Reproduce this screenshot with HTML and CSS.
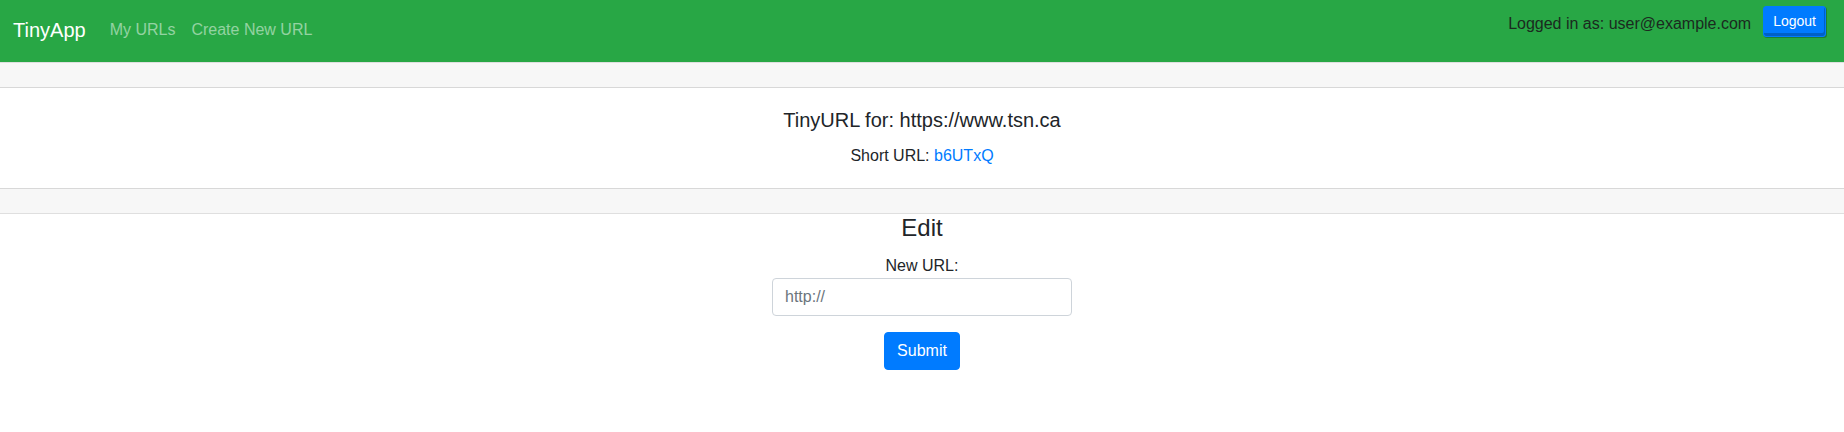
FILE: index.html
```html
<!DOCTYPE html>
<html lang="en">
<head>
<meta charset="utf-8">
<title>TinyApp</title>
<link rel="stylesheet" href="styles.css">
</head>
<body>
<nav class="navbar">
  <div class="nav-left">
    <a class="brand" href="#">TinyApp</a>
    <a class="nav-link" href="#">My URLs</a>
    <a class="nav-link" href="#">Create New URL</a>
  </div>
  <form class="nav-right">
    <span class="user">Logged in as: user@example.com</span>
    <button type="button" class="btn-logout">Logout</button>
  </form>
</nav>

<div class="card">
  <div class="card-header"></div>
  <div class="card-body">
    <h5 class="card-title">TinyURL for: https://www.tsn.ca</h5>
    <p class="card-text">Short URL: <a href="#" class="link">b6UTxQ</a></p>
  </div>
  <div class="card-footer"></div>
</div>

<section class="edit">
  <h4 class="edit-title">Edit</h4>
  <form class="edit-form">
    <div class="form-group">
      <label for="longURL" class="form-label">New URL:</label>
      <input id="longURL" class="form-control" type="text" placeholder="http://">
    </div>
    <button type="button" class="btn-submit">Submit</button>
  </form>
</section>
</body>
</html>
```

FILE: styles.css
```css
* { box-sizing: border-box; }

body {
  margin: 0;
  font-family: "Liberation Sans", Arial, sans-serif;
  font-size: 16px;
  line-height: 1.5;
  color: #212529;
  background: #fff;
}

a { text-decoration: none; }

.navbar {
  display: flex;
  justify-content: space-between;
  align-items: flex-start;
  height: 62px;
  padding: 0 18px 0 13px;
  background: #28a745;
}

.nav-left {
  display: flex;
  align-items: center;
  height: 40px;
  margin-top: 10px;
}

.brand {
  font-size: 20px;
  line-height: 30px;
  padding: 5px 0;
  margin-right: 16px;
  color: #fff;
}

.nav-link {
  padding: 8px;
  line-height: 24px;
  color: rgba(255, 255, 255, 0.5);
}

.nav-right {
  display: flex;
  align-items: flex-start;
  margin: 0;
}

.user {
  margin-top: 12px;
  margin-right: 12px;
  line-height: 24px;
  color: #1b2a1f;
}

.btn-logout {
  margin-top: 6px;
  height: 31px;
  padding: 4px 9px;
  font-family: inherit;
  font-size: 14px;
  line-height: 21px;
  color: #fff;
  background: #007bff;
  border: 1px solid #007bff;
  border-radius: 3px;
  box-shadow: inset -1px -3px 0 rgba(0, 0, 0, 0.22), 1px 1px 0 rgba(0, 0, 0, 0.25);
}

.card {
  border-top: 1px solid rgba(0, 0, 0, 0.125);
  border-bottom: 1px solid rgba(0, 0, 0, 0.125);
}

.card-header {
  height: 25px;
  background: rgba(0, 0, 0, 0.03);
  border-bottom: 1px solid rgba(0, 0, 0, 0.125);
}

.card-footer {
  height: 25px;
  background: rgba(0, 0, 0, 0.03);
  border-top: 1px solid rgba(0, 0, 0, 0.125);
}

.card-body {
  padding: 20px;
  text-align: center;
}

.card-title {
  margin: 0 0 12px;
  font-size: 20px;
  font-weight: 400;
  line-height: 1.2;
}

.card-text {
  margin: 0;
}

.link { color: #007bff; }

.edit {
  display: flex;
  flex-direction: column;
  align-items: center;
}

.edit-title {
  margin: 0 0 11px;
  font-size: 24px;
  font-weight: 400;
  line-height: 1.2;
}

.edit-form {
  display: flex;
  flex-direction: column;
  align-items: center;
}

.form-group {
  display: flex;
  flex-direction: column;
  align-items: center;
  margin-bottom: 16px;
}

.form-label {
  line-height: 24px;
}

.form-control {
  width: 300px;
  height: 38px;
  padding: 6px 12px;
  font-family: inherit;
  font-size: 16px;
  line-height: 24px;
  color: #495057;
  background: #fff;
  border: 1px solid #ced4da;
  border-radius: 4px;
}

.form-control::placeholder {
  color: #6c757d;
  opacity: 1;
}

.btn-submit {
  height: 38px;
  padding: 6px 12px;
  font-family: inherit;
  font-size: 16px;
  line-height: 24px;
  color: #fff;
  background: #007bff;
  border: 1px solid #007bff;
  border-radius: 4px;
}
```
